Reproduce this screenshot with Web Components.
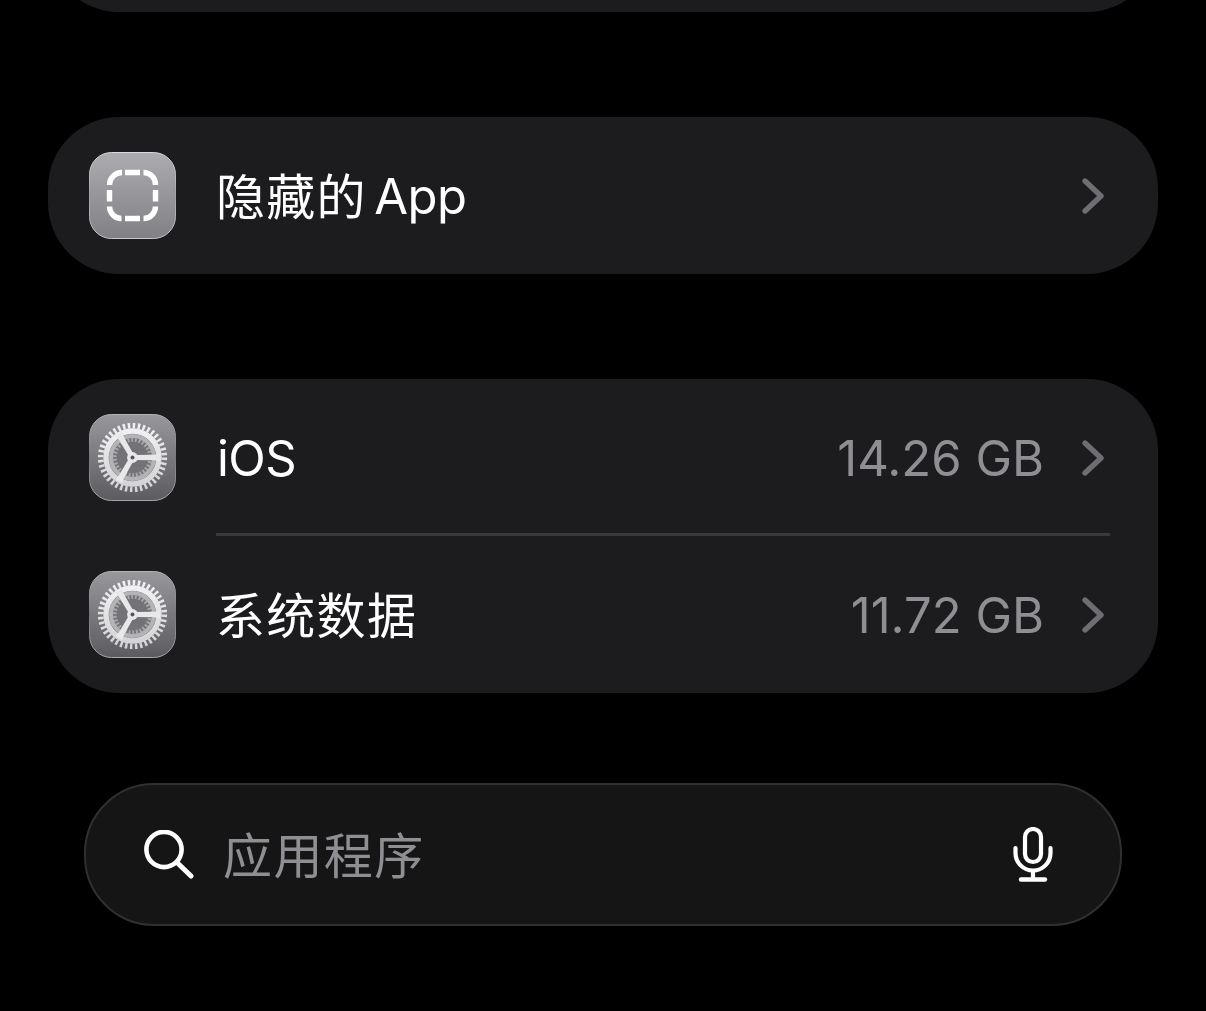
<!DOCTYPE html>
<html lang="zh"><head><meta charset="utf-8"><title>iPhone 储存空间</title>
<style>
html,body{margin:0;background:#000;height:1011px;overflow:hidden}
body{font-family:Inter,"Noto Sans CJK SC",sans-serif;color:#fff}
app-page{display:block}
</style></head><body>
<template id="t-page"><style>
:host{display:flex;flex-direction:column;padding:0 48px;box-sizing:border-box;width:1206px;height:1011px}
.top{margin-top:-145px;height:157px;flex:none}
.s1{height:105px;flex:none}.s2{height:90px;flex:none}
</style>
<set-card class="top"></set-card><div class="s1"></div>
<set-card><set-row label="隐藏的 App"><hidden-icon slot="icon"></hidden-icon></set-row></set-card>
<div class="s1"></div>
<set-card>
<set-row label="iOS" value="14.26 GB" sep><gear-icon slot="icon"></gear-icon></set-row>
<set-row label="系统数据" value="11.72 GB"><gear-icon slot="icon"></gear-icon></set-row>
</set-card>
<div class="s2"></div>
<search-bar placeholder="应用程序"></search-bar>
</template>

<template id="t-card"><style>
:host{display:flex;flex-direction:column;background:#1c1c1e;border-radius:71px;overflow:hidden}
</style><slot></slot></template>

<template id="t-row"><style>
:host{display:flex;align-items:center;height:157px;padding:0 54px 0 41px;position:relative;flex:none;box-sizing:border-box}
.ic{width:87px;height:87px;flex:none;margin-right:41px;display:block}
.l{flex:1;font:400 49px/1 Inter,"Noto Sans CJK SC",sans-serif;color:#fff;white-space:nowrap;padding-top:1px}
.l .c{letter-spacing:1.3px;position:relative;top:1px;margin-left:-1px}
.l .a{letter-spacing:-.5px;word-spacing:-6px}
.v{font:400 49px/1 Inter,"Noto Sans CJK SC",sans-serif;color:#8e8e93;margin-right:38px;white-space:nowrap;padding-top:1px}
svg{display:block;flex:none}
.sep{position:absolute;left:168px;right:48px;bottom:0;height:3px;background:#39393b}
</style>
<div class="ic"><slot name="icon"></slot></div><div class="l"></div><div class="v"></div>
<svg width="22" height="36" viewBox="0 0 22 36"><path d="M3 3 L19 18 L3 33" fill="none" stroke="#6e6e72" stroke-width="5.400" stroke-linecap="round" stroke-linejoin="round"/></svg>
<div class="sep"></div></template>

<template id="t-hidden"><style>:host{display:block;width:87px;height:87px}svg{display:block}</style>
<svg width="87" height="87" viewBox="0 0 87 87">
<defs><linearGradient id="g" x1="0" y1="0" x2="0" y2="1"><stop offset="0" stop-color="#acacb0"/><stop offset="1" stop-color="#818185"/></linearGradient>
<linearGradient id="e" x1="0" y1="0" x2="0" y2="1"><stop offset="0" stop-color="#d8d8da"/><stop offset=".5" stop-color="#a0a0a4"/><stop offset="1" stop-color="#c8c8ca"/></linearGradient></defs>
<rect x=".5" y=".5" width="86" height="86" rx="22" fill="url(#g)" stroke="url(#e)"/>
<g fill="none" stroke="#fff" stroke-width="5.400">
<path d="M20.500 33 A12.500 12.500 0 0 1 33 20.500"/><path d="M36 20.500H51"/><path d="M54.500 20.500 A12 12 0 0 1 66.500 33"/>
<path d="M20.500 38V49.500"/><path d="M66.500 38V49.500"/>
<path d="M20.500 54.500 A12 12 0 0 0 32.500 66.500"/><path d="M36 66.500H51"/><path d="M54.500 66.500 A12 12 0 0 0 66.500 54.500"/>
</g></svg></template>

<template id="t-gear"><style>:host{display:block;width:87px;height:87px}svg{display:block}</style>
<svg width="87" height="87" viewBox="0 0 87 87">
<defs><linearGradient id="g" x1="0" y1="0" x2="0" y2="1"><stop offset="0" stop-color="#98989c"/><stop offset="1" stop-color="#5c5c60"/></linearGradient>
<linearGradient id="e" x1="0" y1="0" x2="0" y2="1"><stop offset="0" stop-color="#b4b4b8"/><stop offset=".5" stop-color="#77777b"/><stop offset="1" stop-color="#a8a8ac"/></linearGradient>
<linearGradient id="m" x1="0" y1="0" x2="0" y2="1"><stop offset="0" stop-color="#f0f0f2"/><stop offset="1" stop-color="#d4d4d6"/></linearGradient></defs>
<rect x=".5" y=".5" width="86" height="86" rx="22" fill="url(#g)" stroke="url(#e)"/>
<circle cx="43.500" cy="43.500" r="25" fill="#737377"/>
<circle cx="43.500" cy="43.500" r="21.500" fill="none" stroke="#b4b4b7" stroke-width="4"/>
<circle cx="43.500" cy="43.500" r="17.800" fill="none" stroke="#a8a8ac" stroke-width="4" stroke-dasharray="1.900 1.830"/>
<circle cx="43.500" cy="43.500" r="31.800" fill="none" stroke="url(#m)" stroke-width="5.600" stroke-dasharray="2.500 2.495"/>
<circle cx="43.500" cy="43.500" r="26.500" fill="none" stroke="url(#m)" stroke-width="5.400"/>
<g fill="#e8e8ea">
<path d="M43.500 41 L66 40.700 L71 39.500 L71 47.500 L66 46.300 L43.500 46Z"/>
<path d="M43.500 41 L66 40.700 L71 39.500 L71 47.500 L66 46.300 L43.500 46Z" transform="rotate(120 43.500 43.500)"/>
<path d="M43.500 41 L66 40.700 L71 39.500 L71 47.500 L66 46.300 L43.500 46Z" transform="rotate(240 43.500 43.500)"/>
<circle cx="43.500" cy="43.500" r="5.400"/></g>
<circle cx="43.500" cy="43.500" r="2" fill="#55555a"/>
</svg></template>

<template id="t-search"><style>
:host{display:flex;align-items:center;box-sizing:border-box;height:143px;margin:0 36px;padding:0 67px 0 58px;background:#151516;border:2px solid #303032;border-radius:70px;flex:none}
svg{display:block;flex:none}
.p{flex:1;font:400 49px/1 "Noto Sans CJK SC",sans-serif;color:#8e8e93;margin-left:29px;letter-spacing:1.4px;padding-bottom:4px}
</style>
<svg width="50" height="50" viewBox="0 0 50 50"><circle cx="20" cy="19.500" r="17.600" fill="none" stroke="#fff" stroke-width="4.600"/><path d="M33 32.500 L47 46" fill="none" stroke="#fff" stroke-width="5" stroke-linecap="round"/></svg>
<div class="p"></div>
<svg width="40" height="56" viewBox="0 0 40 56"><rect x="12" y="2" width="16" height="33" rx="8" fill="none" stroke="#fff" stroke-width="4.200"/><path d="M2.500 21V26A17.500 17.500 0 0 0 37.500 26V21" fill="none" stroke="#fff" stroke-width="4.200" stroke-linecap="round"/><path d="M20 44V52" stroke="#fff" stroke-width="4.200"/><path d="M8 52.500H32" stroke="#fff" stroke-width="4.400" stroke-linecap="round"/></svg>
</template>

<app-page></app-page>
<script>
function def(name,tid,init){customElements.define(name,class extends HTMLElement{constructor(){super();this.attachShadow({mode:"open"}).appendChild(document.getElementById(tid).content.cloneNode(true));}connectedCallback(){if(init)init(this,this.shadowRoot);}});}
def("set-card","t-card");
def("set-row","t-row",(h,s)=>{
  const l=s.querySelector(".l");
  (h.getAttribute("label")||"").split(/([\u4e00-\u9fff]+)/).filter(Boolean).forEach(t=>{
    const sp=document.createElement("span");sp.className=/[\u4e00-\u9fff]/.test(t)?"c":"a";sp.textContent=t;l.appendChild(sp);
  });
  s.querySelector(".v").textContent=h.getAttribute("value")||"";
  if(!h.hasAttribute("sep"))s.querySelector(".sep").remove();
});
def("hidden-icon","t-hidden");
def("gear-icon","t-gear");
def("search-bar","t-search",(h,s)=>{s.querySelector(".p").textContent=h.getAttribute("placeholder");});
def("app-page","t-page");
</script>
</body></html>
